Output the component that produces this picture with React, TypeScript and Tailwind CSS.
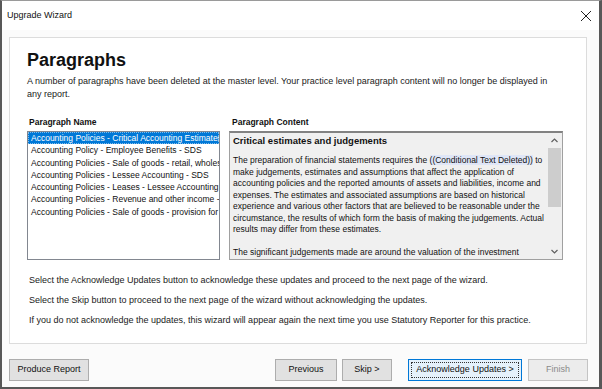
import React from "react";

const paragraphNames = [
  "Accounting Policies - Critical Accounting Estimates - SDS",
  "Accounting Policy - Employee Benefits - SDS",
  "Accounting Policies - Sale of goods - retail, wholesale - SDS",
  "Accounting Policies - Lessee Accounting - SDS",
  "Accounting Policies - Leases - Lessee Accounting - SDS",
  "Accounting Policies - Revenue and other income - SDS",
  "Accounting Policies - Sale of goods - provision for returns - SDS",
];

const Deleted = () => (
  <span className="bg-[#dfe6f7]">((Conditional Text Deleted))</span>
);

const WinButton: React.FC<{
  label: string;
  width: string;
  variant?: "normal" | "default" | "disabled";
}> = ({ label, width, variant = "normal" }) => {
  if (variant === "default") {
    return (
      <div className={`${width} h-[22px] border border-[#0078d7] bg-[#e5f1fb] p-[2px]`}>
        <div className="h-full w-full border border-dotted border-[#333] flex items-center justify-center text-[9px] text-[#111]">
          {label}
        </div>
      </div>
    );
  }
  return (
    <div
      className={`${width} h-[22px] border flex items-center justify-center text-[9px] ${
        variant === "disabled"
          ? "border-[#c4c4c4] bg-[#ececec] text-[#8a8a8a]"
          : "border-[#adadad] bg-[#e1e1e1] text-[#111]"
      }`}
    >
      {label}
    </div>
  );
};

export default function App() {
  return (
    <div
      className="w-[602px] h-[389px] bg-[#fbfbfb] border-l-2 border-r-[3px] border-b-2 border-t border-[#585858] border-t-[#9a9a9a] flex flex-col overflow-hidden text-[#111]"
      style={{ fontFamily: '"Liberation Sans", Arial, sans-serif' }}
    >
      {/* Title bar */}
      <div className="h-[29px] bg-white flex items-center justify-between pl-[5px] pr-[7px]">
        <span className="text-[9px] text-[#111]">Upgrade Wizard</span>
        <svg width="12" height="12" viewBox="0 0 12 12">
          <path d="M1 1L11 11M11 1L1 11" stroke="#222" strokeWidth="1" />
        </svg>
      </div>

      {/* Body */}
      <div className="flex-1 flex flex-col px-[7px] pt-[7px]">
        <div className="h-[307px] w-[578px] bg-white border border-[#dcdcdc] pl-[17px] pr-[6px] pt-[12px]">
          <h1 className="text-[18px] font-bold leading-[21px] text-[#111]">Paragraphs</h1>
          <p className="mt-[4px] text-[9px] leading-[13px] text-[#1a1a1a] whitespace-nowrap">
            A number of paragraphs have been deleted at the master level. Your practice level paragraph content will no longer be displayed in
            <br />
            any report.
          </p>

          <div className="mt-[16px] flex gap-[9px]">
            <div className="w-[193px] flex flex-col">
              <div className="pl-[2px] text-[8.5px] font-bold leading-[11px]">Paragraph Name</div>
              <div className="mt-[3px] h-[129px] border border-[#828790] bg-white overflow-hidden">
                {paragraphNames.map((name, i) => (
                  <div
                    key={name}
                    className={`h-[12.3px] pl-[3px] text-[8.5px] leading-[12px] whitespace-nowrap ${
                      i === 0 ? "bg-[#0078d7] text-white outline outline-1 outline-dotted outline-[#ffffff80] -outline-offset-1" : "text-[#111]"
                    }`}
                  >
                    {name}
                  </div>
                ))}
              </div>
            </div>

            <div className="w-[334px] flex flex-col">
              <div className="pl-[3px] text-[8.5px] font-bold leading-[11px]">Paragraph Content</div>
              <div className="mt-[3px] h-[129px] border border-[#a0a0a0] border-t-[#828282] border-t-2 bg-[#f0f0f0] flex overflow-hidden">
                <div className="flex-1 pl-[3px] pt-[1px] overflow-hidden whitespace-nowrap text-[8.5px] leading-[11.5px] text-[#111]">
                  <div className="text-[9.5px] font-bold leading-[13px]">Critical estimates and judgements</div>
                  <div className="h-[8px]" />
                  <div>The preparation of financial statements requires the <Deleted /> to</div>
                  <div>make judgements, estimates and assumptions that affect the application of</div>
                  <div>accounting policies and the reported amounts of assets and liabilities, income and</div>
                  <div>expenses. The estimates and associated assumptions are based on historical</div>
                  <div>experience and various other factors that are believed to be reasonable under the</div>
                  <div>circumstance, the results of which form the basis of making the judgements. Actual</div>
                  <div>results may differ from these estimates.</div>
                  <div className="h-[11px]" />
                  <div>The significant judgements made are around the valuation of the investment</div>
                  <div>property. The <Deleted /> used recent sales and knowledge of the</div>
                </div>
                {/* Scrollbar */}
                <div className="w-[15px] bg-[#f0f0f0] flex flex-col items-center">
                  <div className="h-[15px] flex items-center justify-center">
                    <svg width="7" height="5" viewBox="0 0 7 5">
                      <path d="M0.5 4L3.5 1L6.5 4" fill="none" stroke="#606060" strokeWidth="1.2" />
                    </svg>
                  </div>
                  <div className="w-[13px] h-[59px] bg-[#cdcdcd]" />
                  <div className="flex-1" />
                  <div className="h-[15px] flex items-center justify-center">
                    <svg width="7" height="5" viewBox="0 0 7 5">
                      <path d="M0.5 1L3.5 4L6.5 1" fill="none" stroke="#606060" strokeWidth="1.2" />
                    </svg>
                  </div>
                </div>
              </div>
            </div>
          </div>

          <div className="mt-[14px] pl-[2px] flex flex-col gap-[8px] text-[9px] leading-[12px] text-[#1a1a1a]">
            <div>Select the Acknowledge Updates button to acknowledge these updates and proceed to the next page of the wizard.</div>
            <div>Select the Skip button to proceed to the next page of the wizard without acknowledging the updates.</div>
            <div>If you do not acknowledge the updates, this wizard will appear again the next time you use Statutory Reporter for this practice.</div>
          </div>
        </div>

        {/* Buttons */}
        <div className="mt-[15px] flex items-center">
          <WinButton label="Produce Report" width="w-[80px]" />
          <div className="flex-1" />
          <div className="flex items-center mr-[4px]">
            <WinButton label="Previous" width="w-[62px]" />
            <div className="w-[5px]" />
            <WinButton label="Skip >" width="w-[50px]" />
            <div className="w-[16px]" />
            <WinButton label="Acknowledge Updates >" width="w-[114px]" variant="default" />
            <div className="w-[6px]" />
            <WinButton label="Finish" width="w-[60px]" variant="disabled" />
          </div>
        </div>
      </div>
    </div>
  );
}
